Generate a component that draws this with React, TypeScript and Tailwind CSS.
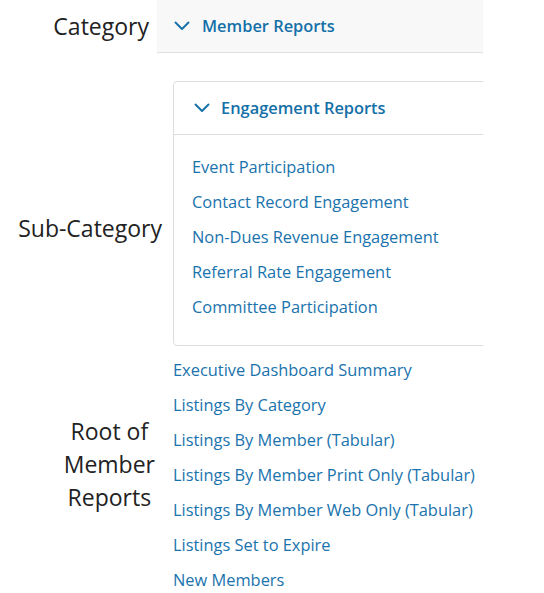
import React from 'react'

const subReports = [
  'Event Participation',
  'Contact Record Engagement',
  'Non-Dues Revenue Engagement',
  'Referral Rate Engagement',
  'Committee Participation',
]

const rootReports = [
  'Executive Dashboard Summary',
  'Listings By Category',
  'Listings By Member (Tabular)',
  'Listings By Member Print Only (Tabular)',
  'Listings By Member Web Only (Tabular)',
  'Listings Set to Expire',
  'New Members',
]

function Chevron() {
  return (
    <svg width="16" height="10" viewBox="0 0 16 10" fill="none" className="shrink-0">
      <path d="M1.5 1.5L8 8l6.5-6.5" stroke="#1470a8" strokeWidth="1.9" strokeLinecap="round" strokeLinejoin="round" />
    </svg>
  )
}

function Label({ children, className = '' }: { children: React.ReactNode; className?: string }) {
  return <div className={`text-[23px] leading-[33px] text-[#222] ${className}`}>{children}</div>
}

export default function App() {
  return (
    <div className="w-[544px] h-[593px] bg-white overflow-hidden" style={{ fontFamily: '"Open Sans", sans-serif' }}>
      {/* Category row */}
      <div className="flex">
        <div className="w-[157px] h-[52px] flex items-center justify-end pr-[8px]">
          <Label>Category</Label>
        </div>
        <div className="w-[326px] h-[53px] bg-[#f8f8f8] border-b border-[#dfe0e4] flex items-center pl-[17px] gap-[12px]">
          <Chevron />
          <span className="text-[16.4px] font-semibold text-[#1470a8]">Member Reports</span>
        </div>
      </div>

      {/* Sub-category row */}
      <div className="flex mt-[28px]">
        <div className="w-[173px] flex items-start justify-end pr-[11px] pt-[131px]">
          <Label>Sub-Category</Label>
        </div>
        <div className="w-[310px] overflow-hidden">
          <div className="w-[330px] border border-[#dcdde1] rounded-[4px]">
            <div className="h-[53px] border-b border-[#dcdde1] flex items-center pl-[20px] gap-[11px]">
              <Chevron />
              <span className="text-[16.4px] font-semibold text-[#1470a8]">Engagement Reports</span>
            </div>
            <ul className="pt-[15px] pb-[20px] pl-[18px]">
              {subReports.map((r) => (
                <li key={r} className="h-[35px] flex items-center text-[16.4px] text-[#1a73ad]">
                  {r}
                </li>
              ))}
            </ul>
          </div>
        </div>
      </div>

      {/* Root reports */}
      <div className="flex mt-[7px]">
        <div className="w-[173px] flex items-start justify-end pr-[18px] pt-[62px]">
          <Label className="text-center leading-[32.5px]">
            Root of
            <br />
            Member
            <br />
            Reports
          </Label>
        </div>
        <ul>
          {rootReports.map((r) => (
            <li key={r} className="h-[35px] flex items-center text-[16.4px] text-[#1a73ad]">
              {r}
            </li>
          ))}
        </ul>
      </div>
    </div>
  )
}
